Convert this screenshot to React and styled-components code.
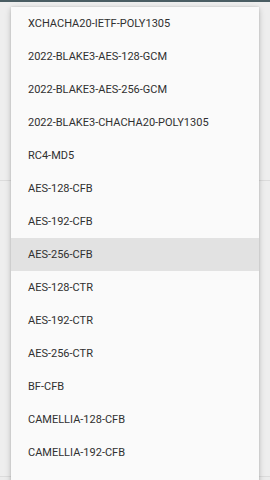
import React from "react";
import styled, { createGlobalStyle } from "styled-components";

const Global = createGlobalStyle`
  html, body { margin: 0; padding: 0; width: 270px; height: 480px; overflow: hidden; }
  body { font-family: Roboto, "Noto Sans", sans-serif; background: #ececec; }
`;

const Screen = styled.div`
  position: relative;
  width: 270px;
  height: 480px;
  overflow: hidden;
  background: #ececec;
  display: flex;
  flex-direction: column;
`;

const TopBar = styled.div`
  height: 2px;
  background: #4a5d63;
  flex: none;
`;

const Section = styled.div`
  height: ${(p) => p.$h}px;
  border-bottom: 1px solid #dcdcdc;
  background: #eeeeee;
  flex: none;
`;

const Menu = styled.ul`
  position: absolute;
  left: 11px;
  top: 7px;
  width: 248px;
  height: 490px;
  margin: 0;
  padding: 0;
  list-style: none;
  background: #fafafa;
  box-shadow: 0 2px 6px rgba(0, 0, 0, 0.22), 0 0 2px rgba(0, 0, 0, 0.12);
`;

const Item = styled.li`
  height: 33px;
  display: flex;
  align-items: center;
  padding-left: 17px;
  font-size: 11px;
  color: #303030;
  background: ${(p) => (p.$active ? "#e2e2e2" : "transparent")};
  white-space: nowrap;
`;

const items = [
  "XCHACHA20-IETF-POLY1305",
  "2022-BLAKE3-AES-128-GCM",
  "2022-BLAKE3-AES-256-GCM",
  "2022-BLAKE3-CHACHA20-POLY1305",
  "RC4-MD5",
  "AES-128-CFB",
  "AES-192-CFB",
  "AES-256-CFB",
  "AES-128-CTR",
  "AES-192-CTR",
  "AES-256-CTR",
  "BF-CFB",
  "CAMELLIA-128-CFB",
  "CAMELLIA-192-CFB",
];

export default function App() {
  return (
    <>
      <Global />
      <Screen>
        <TopBar />
        <Section $h={178} />
        <Section $h={295} />
        <Menu>
          {items.map((t) => (
            <Item key={t} $active={t === "AES-256-CFB"}>
              {t}
            </Item>
          ))}
        </Menu>
      </Screen>
    </>
  );
}
